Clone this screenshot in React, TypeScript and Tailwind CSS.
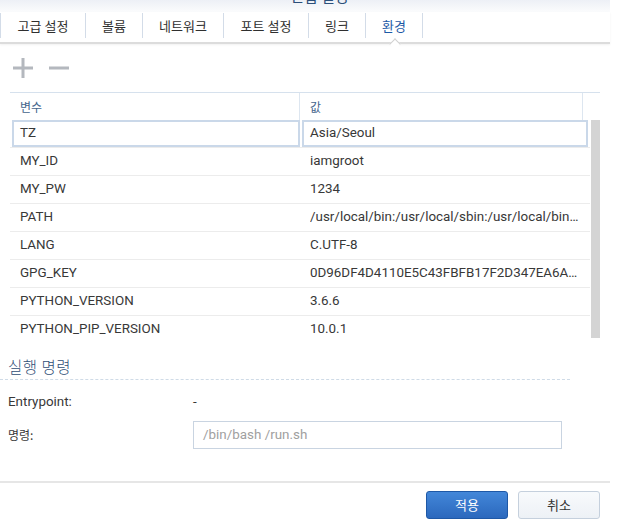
import React from "react";

const tabs = [
  { label: "고급 설정", w: "w-[85px]" },
  { label: "볼륨", w: "w-[57px]" },
  { label: "네트워크", w: "w-[81px]" },
  { label: "포트 설정", w: "w-[85px]" },
  { label: "링크", w: "w-[57px]" },
  { label: "환경", w: "w-[57px]", active: true },
];

const rows: [string, string][] = [
  ["TZ", "Asia/Seoul"],
  ["MY_ID", "iamgroot"],
  ["MY_PW", "1234"],
  ["PATH", "/usr/local/bin:/usr/local/sbin:/usr/local/bin:/usr/sbin:/usr/bin:/sbin:/bin"],
  ["LANG", "C.UTF-8"],
  ["GPG_KEY", "0D96DF4D4110E5C43FBFB17F2D347EA6AA65421D"],
  ["PYTHON_VERSION", "3.6.6"],
  ["PYTHON_PIP_VERSION", "10.0.1"],
];

export default function App() {
  return (
    <div className="w-[640px] h-[525px] bg-white overflow-hidden font-['Roboto','Noto_Sans_CJK_KR',sans-serif] text-[13.4px] text-[#383838]">
      <div className="w-[610px] flex flex-col">
        {/* title strip */}
        <div className="h-[12px] bg-gradient-to-b from-[#edf0f6] to-[#fbfcfd] overflow-hidden relative">
          <div className="absolute left-[290px] top-[-12px] text-[15px] text-[#2b4f7a] font-['Noto_Sans_CJK_KR',sans-serif] leading-[16px]">
            편집 설정
          </div>
        </div>
        {/* tabs */}
        <div className="h-[32px] flex items-start border-b-2 border-[#dcdcdc] shadow-[0_1px_2px_rgba(0,0,0,0.06)] relative">
          <div className="h-[25px] mt-[1px] border-l border-[#d3dce8]" />
          {tabs.map((t) => (
            <div
              key={t.label}
              className={`${t.w} h-[25px] mt-[1px] border-r border-[#d3dce8] flex items-center justify-center relative font-['Noto_Sans_CJK_KR',sans-serif] text-[13px] ${
                t.active ? "text-[#1d5aa6]" : "text-[#2f2f2f]"
              }`}
            >
              {t.label}
              {t.active && (
                <div className="absolute left-[25px] top-[27px] w-[8px] h-[8px] bg-white border-l border-t border-[#d0d0d0] rotate-45" />
              )}
            </div>
          ))}
        </div>
        {/* toolbar */}
        <div className="h-[48px] flex items-start pt-[14px] pl-[13px] gap-[16px]">
          <svg width="20" height="20" viewBox="0 0 20 20">
            <rect x="0" y="8.5" width="20" height="3" fill="#b4b8be" />
            <rect x="8.5" y="0" width="3" height="20" fill="#b4b8be" />
          </svg>
          <svg width="20" height="20" viewBox="0 0 20 20">
            <rect x="0" y="8.5" width="20" height="3" fill="#b4b8be" />
          </svg>
        </div>
        {/* grid */}
        <div className="ml-[10px] w-[590px]">
          <div className="flex h-[28px] border-t border-[#d6e1ed] items-stretch">
            <div className="w-[290px] border-r border-[#dde6f0] flex items-center pl-[10px] text-[#45658c] font-['Noto_Sans_CJK_KR',sans-serif] text-[12px]">
              변수
            </div>
            <div className="w-[283px] border-r border-[#dde6f0] flex items-center pl-[10px] text-[#45658c] font-['Noto_Sans_CJK_KR',sans-serif] text-[12px]">
              값
            </div>
            <div className="flex-1" />
          </div>
          <div className="flex h-[218px] overflow-hidden">
            <div className="w-[580px] flex flex-col">
              {rows.map(([k, v], i) =>
                i === 0 ? (
                  <div key={k} className="h-[28px] flex shrink-0 border-b border-[#ececec]">
                    <div className="w-[288px] ml-[2px] mr-[2px] border-2 border-[#cad8e9] flex items-center pl-[6px]">
                      {k}
                    </div>
                    <div className="w-[286px] mr-[2px] border-2 border-[#cad8e9] flex items-center pl-[6px] whitespace-nowrap overflow-hidden">
                      {v}
                    </div>
                  </div>
                ) : (
                  <div key={k} className="h-[28px] flex shrink-0 border-b border-[#ececec]">
                    <div className="w-[290px] flex items-center pl-[10px]">{k}</div>
                    <div className="w-[290px] flex items-center pl-[10px] pr-[10px] overflow-hidden">
                      <span className="block w-full whitespace-nowrap overflow-hidden text-ellipsis">{v}</span>
                    </div>
                  </div>
                )
              )}
            </div>
            <div className="w-[9px] ml-[1px] bg-[#d4d4d4]" />
          </div>
        </div>
        {/* section */}
        <div className="mt-[19px] pl-[8px] h-[22px] text-[15.5px] text-[#2f4e76] font-['Noto_Sans_CJK_KR',sans-serif] font-light leading-[18px] tracking-[0.5px]">
          실행 명령
        </div>
        <div className="w-[570px] border-t border-dashed border-[#cfdbe7]" />
        <div className="flex items-center h-[18px] mt-[13px] pl-[8px]">
          <div className="w-[185px]">Entrypoint:</div>
          <div>-</div>
        </div>
        <div className="flex items-center mt-[10px] pl-[8px]">
          <div className="w-[185px] font-['Noto_Sans_CJK_KR',sans-serif] text-[12px]">명령:</div>
          <div className="w-[369px] h-[28px] border border-[#c9d4e1] flex items-center pl-[9px] text-[#a0a0a0]">
            /bin/bash /run.sh
          </div>
        </div>
        {/* footer */}
        <div className="mt-[32px] border-t-2 border-[#e6e6e6]" />
        <div className="flex justify-end gap-[10px] pr-[10px] mt-[8px]">
          <button className="w-[82px] h-[28px] rounded-[3px] border border-[#1e58a6] bg-gradient-to-b from-[#4387d9] to-[#2b68bd] text-white text-[13px] font-['Noto_Sans_CJK_KR',sans-serif]">
            적용
          </button>
          <button className="w-[82px] h-[28px] rounded-[3px] border border-[#c5d0dd] bg-gradient-to-b from-[#f8fafc] to-[#edf1f6] text-[#333] text-[13px] font-['Noto_Sans_CJK_KR',sans-serif]">
            취소
          </button>
        </div>
      </div>
    </div>
  );
}
